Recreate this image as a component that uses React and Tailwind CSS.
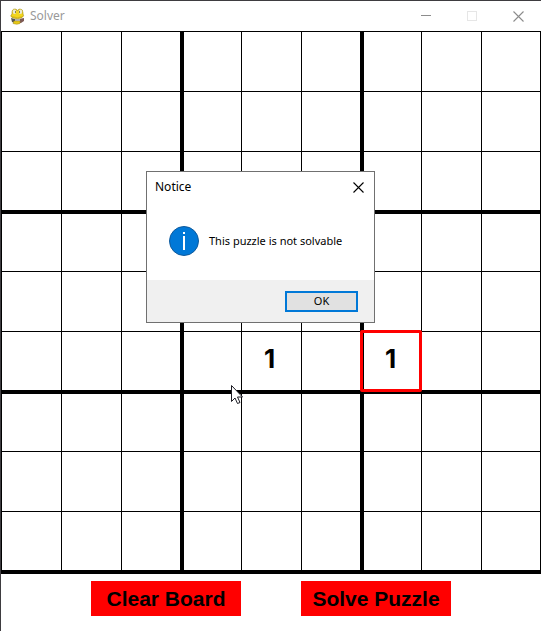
import React from "react";

const SIZE = 9;
const values = { "5-4": "1", "5-6": "1" };
const selected = "5-6";

function cellClass(row, col) {
  const left = col > 0 && col % 3 === 0 ? "border-l-3" : "border-l";
  const top = row > 0 && row % 3 === 0 ? "border-t-3" : "border-t";
  const right = col % 3 === 2 ? "border-r" : "";
  const bottom = row % 3 === 2 ? "border-b" : "";
  return `${left} ${top} ${right} ${bottom}`;
}

function SnakeIcon() {
  return (
    <svg width="16" height="17" viewBox="0 0 16 17" aria-hidden="true">
      <path d="M2 10 L6 11 V15 L3 14 Z" fill="#55564f" />
      <path d="M10 11 L15 10 V13 L12 15 H10 Z" fill="#7d5a55" />
      <path d="M5 13 H11 V15.500 Q8 17 4 15.500 Z" fill="#e6c817" stroke="#a08a18" strokeWidth="0.500" />
      <path d="M3 6 Q2.500 1 6 1 Q8 1 8.500 3 Q9 1 11 1 Q14 1 14 5 V6 Q15.500 8 13 9.500 Q8.500 12 3 9.500 Q0.500 8 3 6 Z" fill="#f2d51c" stroke="#9c861a" strokeWidth="0.600" />
      <ellipse cx="5.500" cy="3.800" rx="1.700" ry="2.200" fill="#e9e8d4" />
      <ellipse cx="11.500" cy="3.800" rx="1.700" ry="2.200" fill="#e9e8d4" />
      <path d="M6 3 h1 v2 h-1 Z M10 3 h1 v2 h-1 Z" fill="#85805a" />
      <path d="M3 8.500 Q8.500 11 14 8.500" stroke="#c9aa12" strokeWidth="0.600" fill="none" />
      <path d="M6 11 H11 V13 H6 Z" fill="#b0afa9" />
    </svg>
  );
}

function CloseIcon() {
  return (
    <svg width="11" height="11" viewBox="0 0 11 11" aria-hidden="true">
      <path d="M0.500 0.500 L10.500 10.500 M10.500 0.500 L0.500 10.500" stroke="currentColor" strokeWidth="1.100" />
    </svg>
  );
}

function TitleBar() {
  return (
    <header className="flex h-[30px] items-center pl-2">
      <SnakeIcon />
      <h1 className="ml-[5px] flex-1 text-[12px] leading-4 text-[#999999]">Solver</h1>
      <div className="flex h-full text-[#8c8c8c]">
        <button aria-label="Minimize" className="flex w-[46px] items-center justify-center">
          <svg width="10" height="10" viewBox="0 0 10 10" aria-hidden="true">
            <path d="M0 4.500 H10" stroke="currentColor" />
          </svg>
        </button>
        <button aria-label="Maximize" disabled className="flex w-[46px] items-center justify-center">
          <svg width="10" height="10" viewBox="0 0 10 10" aria-hidden="true">
            <rect x="0.500" y="0.500" width="9" height="9" fill="none" stroke="#e6e6e6" />
          </svg>
        </button>
        <button aria-label="Close" className="flex w-[46px] items-center justify-center">
          <CloseIcon />
        </button>
      </div>
    </header>
  );
}

function Board() {
  const cells = [];
  for (let row = 0; row < SIZE; row++) {
    for (let col = 0; col < SIZE; col++) {
      const key = `${row}-${col}`;
      const ring = key === selected ? "relative rounded-[1px] outline-3 -outline-offset-2 outline-[#ff0000]" : "";
      cells.push(
        <button
          key={key}
          aria-label={`Row ${row + 1}, column ${col + 1}`}
          className={`flex aspect-square items-center justify-center border-black pr-1 pb-1 text-[26px] leading-8 font-bold ${cellClass(row, col)} ${ring}`}
        >
          {values[key]}
        </button>
      );
    }
  }
  return <div className="grid grid-cols-9 border-b-3 border-black font-['Inter',sans-serif]">{cells}</div>;
}

function Notice() {
  return (
    <section
      role="dialog"
      aria-labelledby="notice-title"
      className="absolute top-[170px] left-[145px] w-[229px] border border-[#707070] bg-white text-black"
    >
      <div className="flex h-[30px] items-center justify-between pr-[10px] pl-2">
        <h2 id="notice-title" className="text-[12px] leading-4">Notice</h2>
        <button aria-label="Close notice">
          <CloseIcon />
        </button>
      </div>
      <div className="flex h-[78px] items-center gap-[10px] pl-[22px]">
        <svg width="30" height="30" viewBox="0 0 30 30" aria-hidden="true">
          <circle cx="15" cy="15" r="14.500" fill="#0078d7" stroke="#0f5a9c" />
          <path d="M14 6 h2 v2 h-2 Z M14 10 h2 v14 h-2 Z" fill="#ffffff" />
        </svg>
        <p className="text-[11px] leading-4 whitespace-nowrap">This puzzle is not solvable</p>
      </div>
      <div className="flex h-[42px] items-center justify-end bg-[#f0f0f0] pr-4">
        <button className="h-[21px] w-[73px] border-2 border-[#0078d7] bg-[#e1e1e1] text-[11px] leading-4">OK</button>
      </div>
    </section>
  );
}

function Pointer() {
  return (
    <svg className="absolute top-[384px] left-[230px]" width="13" height="20" viewBox="0 0 13 20" aria-hidden="true">
      <path
        d="M0.500 0.500 V16.500 L4 13 L6.500 18.500 L9 17.500 L6.500 12 H11.500 Z"
        fill="#ffffff"
        stroke="#1c1c24"
      />
    </svg>
  );
}

export default function App() {
  return (
    <main className="relative min-h-screen border-t border-l border-[#3e3c40] bg-white font-['Noto_Sans',sans-serif] text-black">
      <TitleBar />
      <Board />
      <div className="flex justify-center gap-[60px] py-[7px] font-['Liberation_Sans',sans-serif] text-[21px] leading-6 font-bold">
        <button className="h-[35px] w-[150px] bg-[#ff0000]">Clear Board</button>
        <button className="h-[35px] w-[150px] bg-[#ff0000]">Solve Puzzle</button>
      </div>
      <Notice />
      <Pointer />
    </main>
  );
}
